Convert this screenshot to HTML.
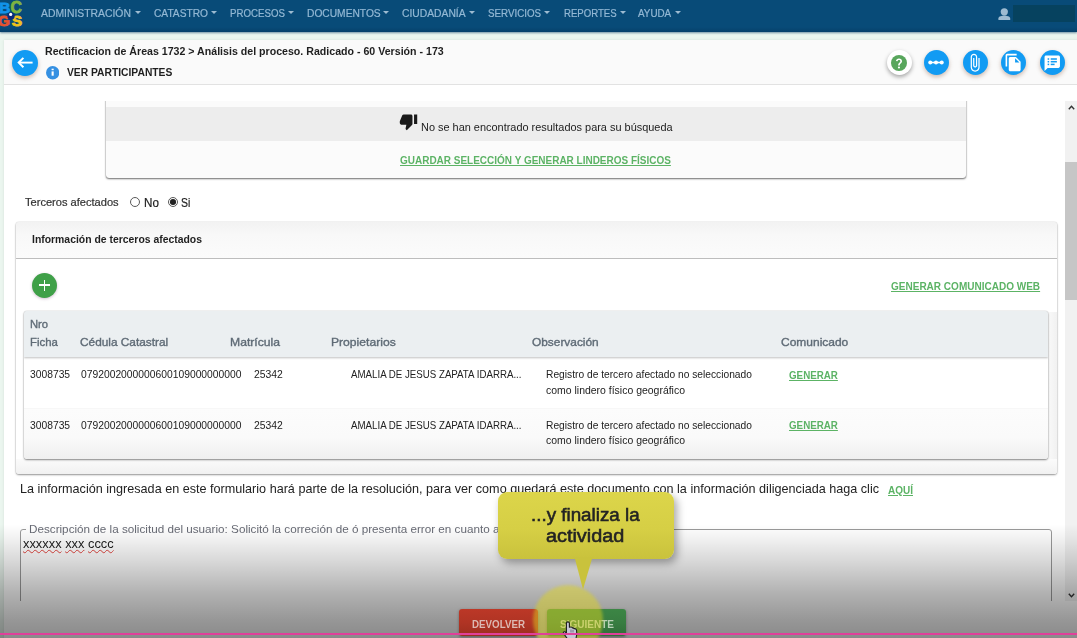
<!DOCTYPE html>
<html><head><meta charset="utf-8"><title>BCGS</title>
<style>
html,body{margin:0;padding:0;}
body{width:1077px;height:638px;overflow:hidden;position:relative;background:#ebf6ef;font-family:"Liberation Sans",sans-serif;}
.abs{position:absolute;}
.t{position:absolute;transform-origin:0 0;white-space:nowrap;line-height:1;font-family:"Liberation Sans",sans-serif;}
#nav{position:absolute;left:0;top:0;width:1077px;height:32px;background:linear-gradient(#084b78,#084b78 85%,#06406a);box-shadow:0 1px 2px rgba(10,60,100,.55);}
#redact{position:absolute;left:1013px;top:5px;width:62px;height:17px;background:#06425f;}
.caret{position:absolute;top:11px;width:0;height:0;border-left:3px solid transparent;border-right:3px solid transparent;border-top:3.5px solid #9dbbd1;}
#card{position:absolute;left:4px;top:39.5px;width:1080px;height:610px;background:#fff;box-shadow:0 0 3px rgba(0,0,0,.09);}
#cardhead{position:absolute;left:0;top:0;width:100%;height:45px;background:#fafafa;border-bottom:1px solid #e2e2e2;box-sizing:border-box;}
.fab{position:absolute;border-radius:50%;background:#129bf3;box-shadow:0 2px 4px rgba(120,70,40,.35);}
#scroll{position:absolute;left:0;top:101px;width:1077px;height:500px;overflow:hidden;}
#sbar{position:absolute;left:1065px;top:101px;width:12px;height:500px;background:#f1f1f1;}
#sthumb{position:absolute;left:1065px;top:162px;width:12px;height:138px;background:#c6c6c6;}
#box1{position:absolute;left:106px;top:-6px;width:860px;height:83px;background:#fbfbfb;border-radius:0 0 3px 3px;box-shadow:0 1px 2px rgba(0,0,0,.55),0 0 1px rgba(0,0,0,.5);}
#box1 .g{position:absolute;left:0;top:11.800px;width:100%;height:34.400px;background:#ededed;}
#panel{position:absolute;left:16px;top:120.5px;width:1041px;height:252px;background:#fff;border-radius:3px;box-shadow:0 1px 2px rgba(0,0,0,.4),0 0 1px rgba(0,0,0,.35);}
#panelhead{position:absolute;left:0;top:0;width:100%;height:36px;background:linear-gradient(#f2f2f2,#f8f8f8 35%,#fbfbfb);border-bottom:1.5px solid #bdbdbd;border-radius:3px 3px 0 0;}
#tbl{position:absolute;left:24px;top:209.5px;width:1024px;height:148px;background:#fff;border-radius:3px;box-shadow:0 1px 2px rgba(0,0,0,.45),0 0 1px rgba(0,0,0,.4);overflow:hidden;}
#tblhead{position:absolute;left:0;top:0;width:100%;height:46px;background:#ebeff1;box-shadow:0 1px 2px rgba(0,0,0,.25);}
#row2{position:absolute;left:0;top:97px;width:100%;height:51px;background:linear-gradient(#fcfcfc,#fafafa 55%,#efefef);border-top:1px solid #f7f7f7;}
.radio{position:absolute;width:8.4px;height:8.4px;border:1px solid #5a5a5a;border-radius:50%;background:#fff;}
#fs{position:absolute;left:20px;top:428px;width:1032.3px;height:120px;border:1px solid #9a9a9a;border-radius:3px;box-sizing:border-box;}
#fsmask{position:absolute;left:26px;top:424px;width:474px;height:8px;background:#fff;}
#shade{position:absolute;left:0;top:524px;width:1077px;height:114px;background:linear-gradient(rgba(0,0,0,0) 0%,rgba(0,0,0,.05) 12%,rgba(0,0,0,.16) 34%,rgba(0,0,0,.30) 60%,rgba(0,0,0,.41) 85%,rgba(0,0,0,.46) 100%);}
.btn{position:absolute;top:609px;height:27px;border-radius:3px;box-shadow:0 1px 3px rgba(0,0,0,.35);}
#pink{position:absolute;left:0;top:633px;width:1077px;height:2px;background:#e0409a;}
#callout{position:absolute;left:497.5px;top:491.5px;width:176.5px;height:67px;border-radius:9px;background:linear-gradient(#dcd54a,#d6cf45 55%,#c9c23c);box-shadow:3px 4px 8px rgba(0,0,0,.35);}
#hl{position:absolute;left:533px;top:584.5px;width:70px;height:70px;border-radius:50%;background:rgba(222,212,30,.48);filter:blur(1.5px);}
.ct{position:absolute;white-space:nowrap;line-height:1;font-weight:700;color:#222;font-size:18px;}

u.w{text-decoration:underline wavy #e0443e;text-decoration-thickness:1px;text-underline-offset:0.5px;}

</style></head>
<body>
<div id="nav">
  <svg class="abs" style="left:0;top:0" width="26" height="31" viewBox="0 0 26 31">
    <text x="-0.8" y="13.2" font-family="Liberation Sans" font-weight="700" font-size="15.3" fill="#1193ea" stroke="#1193ea" stroke-width=".9">B</text>
    <text x="10.600" y="13.400" font-family="Liberation Sans" font-weight="700" font-size="15.7" fill="#7db441" stroke="#7db441" stroke-width=".9">C</text>
    <text x="-2.200" y="26.300" font-family="Liberation Sans" font-weight="700" font-size="15.500" fill="#e4532f" stroke="#e4532f" stroke-width=".9">G</text>
    <text x="11.800" y="26.300" font-family="Liberation Sans" font-weight="700" font-size="15.500" fill="#efc21c" stroke="#efc21c" stroke-width=".9">S</text>
    <circle cx="11" cy="16" r="3.700" fill="#0b2a7c"/>
    <circle cx="10.700" cy="14.400" r="1.600" fill="#fff"/>
  </svg>
  <div class="caret" style="left:134.8px"></div>
  <div class="caret" style="left:210.8px"></div>
  <div class="caret" style="left:287.9px"></div>
  <div class="caret" style="left:383.4px"></div>
  <div class="caret" style="left:469px"></div>
  <div class="caret" style="left:544.3px"></div>
  <div class="caret" style="left:619.6px"></div>
  <div class="caret" style="left:674.9px"></div>
  <svg class="abs" style="left:998px;top:7.5px" width="12.5" height="12.5" viewBox="0 0 12.5 12.5">
    <circle cx="6.3" cy="3.8" r="3.6" fill="#9dbbd1"/>
    <path d="M0.4 12 v-1.6 c0-2 3.8-2.9 5.9-2.9 s5.9 .9 5.9 2.9 V12 z" fill="#9dbbd1"/>
  </svg>
  <div id="redact"></div>
</div>

<div id="card"><div id="cardhead"></div></div>

<!-- back button -->
<div class="fab" style="left:12.3px;top:50px;width:25.8px;height:25.8px;"></div>
<svg class="abs" style="left:12px;top:50px" width="27" height="27" viewBox="12 50 27 27"><path d="M18.9 62.600H32.600" stroke="#fff" stroke-width="1.900" fill="none"/><path d="M23.400 57.900L18.700 62.600L23.400 67.300" stroke="#fff" stroke-width="2" fill="none" stroke-linejoin="miter"/></svg>
<!-- info icon -->
<svg class="abs" style="left:45.600px;top:66.200px" width="13.400" height="13.400" viewBox="0 0 13.400 13.400"><circle cx="6.700" cy="6.700" r="6.700" fill="#3590e2"/><rect x="5.600" y="5.400" width="2.100" height="4.300" fill="#fff"/><rect x="5.600" y="2.700" width="2.100" height="1.500" fill="#fff"/></svg>

<!-- right icons -->
<div class="fab" style="left:886.5px;top:50px;width:25px;height:25px;background:#fff;box-shadow:0 2px 4px rgba(0,0,0,.35);"></div>
<svg class="abs" style="left:891px;top:54.5px" width="16" height="16" viewBox="0 0 24 24"><circle cx="12" cy="12" r="12" fill="#58a65c"/><path d="M10.7 15.6h2.5v-.5c0-1 .5-1.6 1.4-2.4 1-.9 1.9-1.8 1.9-3.5 0-2.3-1.9-3.9-4.5-3.9-2.5 0-4.3 1.5-4.6 3.8l2.4.4c.2-1.200 1-2 2.200-2 1.200 0 2 .7 2 1.800 0 .9-.5 1.500-1.400 2.300-1.200 1-1.900 2-1.900 3.500z" fill="#fff"/><circle cx="11.950" cy="18.700" r="1.600" fill="#fff"/></svg>

<div class="fab" style="left:923.8px;top:50px;width:25px;height:25px;"></div>
<svg class="abs" style="left:928.3px;top:58px" width="16" height="9" viewBox="0 0 32 18"><rect x="3" y="7.4" width="26" height="3.200" fill="#fff"/><circle cx="4.500" cy="9" r="4" fill="#fff"/><circle cx="16" cy="9" r="4" fill="#fff"/><circle cx="27.500" cy="9" r="4" fill="#fff"/></svg>

<div class="fab" style="left:962.5px;top:50px;width:25px;height:25px;"></div>
<svg class="abs" style="left:965.3px;top:52.6px" width="19.5" height="19.5" viewBox="0 0 24 24"><path d="M16.500 6v11.500c0 2.200-1.800 4-4 4s-4-1.800-4-4V5c0-1.400 1.100-2.500 2.500-2.500s2.500 1.100 2.500 2.500v10.500c0 .55-.45 1-1 1s-1-.45-1-1V6H10v9.500c0 1.400 1.100 2.500 2.500 2.500s2.500-1.100 2.500-2.500V5c0-2.200-1.800-4-4-4S7 2.800 7 5v12.500c0 3 2.500 5.500 5.500 5.500s5.500-2.500 5.500-5.500V6z" fill="#fff"/></svg>

<div class="fab" style="left:1001.200px;top:50px;width:25px;height:25px;"></div>
<svg class="abs" style="left:1004.2px;top:52.6px" width="19" height="19" viewBox="0 0 24 24"><path d="M16 1H4c-1.100 0-2 .9-2 2v14h2V3h12z" fill="#fff"/><path d="M15 5H8c-1.100 0-2 .9-2 2v14c0 1.100.9 2 2 2h11c1.100 0 2-.9 2-2V11zM14 12V6.500l5.500 5.500z" fill="#fff"/></svg>

<div class="fab" style="left:1039.500px;top:50px;width:25px;height:25px;"></div>
<svg class="abs" style="left:1043px;top:54px" width="18.5" height="18.5" viewBox="0 0 24 24"><path d="M20 2H4c-1.100 0-2 .9-2 2v18l4-4h14c1.100 0 2-.9 2-2V4c0-1.100-.9-2-2-2z" fill="#fff"/><g fill="#129bf3"><rect x="6" y="5.500" width="2" height="2"/><rect x="6" y="9" width="2" height="2"/><rect x="6" y="12.500" width="2" height="2"/><rect x="10" y="5.500" width="8" height="2"/><rect x="10" y="9" width="8" height="2"/><rect x="10" y="12.500" width="5" height="2"/></g></svg>

<!-- scroll area -->
<div id="scroll">
  <div id="box1"><div class="g"></div></div>
  <div id="panel"><div class="abs" style="right:0;top:90px;width:9px;bottom:0;background:linear-gradient(to right,#f9f9f9,#f1f1f1);border-radius:0 0 3px 0"></div><div class="abs" style="left:0;right:0;bottom:0;height:15px;background:linear-gradient(#fbfbfb,#f1f1f1);border-radius:0 0 3px 3px"></div><div id="panelhead"></div></div>
  <div id="tbl"><div id="tblhead"></div><div id="row2"></div></div>
  <div id="fs"></div><div id="fsmask"></div>
</div>
<div id="sbar"></div><div id="sthumb"></div>
<svg class="abs" style="left:1067.500px;top:104.500px" width="7" height="5" viewBox="0 0 7 5"><path d="M0.800 4.200 L3.500 1.300 L6.200 4.200" fill="none" stroke="#333" stroke-width="1.400"/></svg>
<svg class="abs" style="left:1067.500px;top:593px" width="7" height="5" viewBox="0 0 7 5"><path d="M0.800 0.800 L3.500 3.700 L6.200 0.800" fill="none" stroke="#333" stroke-width="1.400"/></svg>

<!-- thumb down -->
<svg class="abs" style="left:397.700px;top:112px" width="21" height="19" viewBox="0 0 24 24"><path d="M15 3H6c-.83 0-1.540.5-1.840 1.220l-3.020 7.050c-.09.230-.14.470-.14.730v2c0 1.100.9 2 2 2h6.310l-.95 4.570-.03.320c0 .41.170.79.440 1.060L9.830 23l6.590-6.590c.36-.36.580-.86.580-1.410V5c0-1.100-.9-2-2-2zm4 0v12h4V3h-4z" fill="#1a1a1a"/></svg>

<!-- radios -->
<div class="radio" style="left:130.000px;top:196.600px"></div>
<div class="radio" style="left:167.700px;top:196.600px"></div>
<div class="abs" style="left:170.1px;top:199px;width:5.6px;height:5.6px;border-radius:50%;background:#222"></div>

<!-- add button -->
<div class="fab" style="left:32.200px;top:272.600px;width:25px;height:25px;background:#3fa048;box-shadow:0 1px 3px rgba(90,30,90,.28);"></div>
<div class="abs" style="left:39.200px;top:284.300px;width:11px;height:1.600px;background:#fff"></div>
<div class="abs" style="left:43.900px;top:279.600px;width:1.600px;height:11px;background:#fff"></div>

<span class="t" style="left:41.2px;top:9.3px;font-size:10px;font-weight:400;color:#93b8d4;transform:scaleX(1.0372);-webkit-text-stroke:0.2px #93b8d4;">ADMINISTRACIÓN</span>
<span class="t" style="left:153.5px;top:9.3px;font-size:10px;font-weight:400;color:#93b8d4;transform:scaleX(1.0176);-webkit-text-stroke:0.2px #93b8d4;">CATASTRO</span>
<span class="t" style="left:229.8px;top:9.3px;font-size:10px;font-weight:400;color:#93b8d4;transform:scaleX(0.9685);-webkit-text-stroke:0.2px #93b8d4;">PROCESOS</span>
<span class="t" style="left:306.5px;top:9.3px;font-size:10px;font-weight:400;color:#93b8d4;transform:scaleX(1.0229);-webkit-text-stroke:0.2px #93b8d4;">DOCUMENTOS</span>
<span class="t" style="left:402.0px;top:9.3px;font-size:10px;font-weight:400;color:#93b8d4;transform:scaleX(1.0310);-webkit-text-stroke:0.2px #93b8d4;">CIUDADANÍA</span>
<span class="t" style="left:487.5px;top:9.3px;font-size:10px;font-weight:400;color:#93b8d4;transform:scaleX(0.9764);-webkit-text-stroke:0.2px #93b8d4;">SERVICIOS</span>
<span class="t" style="left:563.5px;top:9.3px;font-size:10px;font-weight:400;color:#93b8d4;transform:scaleX(0.9609);-webkit-text-stroke:0.2px #93b8d4;">REPORTES</span>
<span class="t" style="left:638.0px;top:9.3px;font-size:10px;font-weight:400;color:#93b8d4;transform:scaleX(0.9846);-webkit-text-stroke:0.2px #93b8d4;">AYUDA</span>
<span class="t" style="left:44.6px;top:46.9px;font-size:10.4px;font-weight:700;color:#1f1f1f;transform:scaleX(1.0215);">Rectificacion de Áreas 1732 > Análisis del proceso. Radicado - 60 Versión - 173</span>
<span class="t" style="left:66.7px;top:67.8px;font-size:10.4px;font-weight:700;color:#1f1f1f;transform:scaleX(0.9895);">VER PARTICIPANTES</span>
<span class="t" style="left:421.0px;top:122.4px;font-size:10.7px;font-weight:400;color:#222;transform:scaleX(1.0228);">No se han encontrado resultados para su búsqueda</span>
<span class="t" style="left:400.2px;top:154.7px;font-size:10.5px;font-weight:700;color:#5cb365;transform:scaleX(0.9508);text-decoration:underline;text-decoration-thickness:1px;text-underline-offset:0.8px;">GUARDAR SELECCIÓN Y GENERAR LINDEROS FÍSICOS</span>
<span class="t" style="left:24.6px;top:198.1px;font-size:10.4px;font-weight:400;color:#333;transform:scaleX(1.0661);-webkit-text-stroke:0.2px #333;">Terceros afectados</span>
<span class="t" style="left:144.0px;top:196.6px;font-size:12.2px;font-weight:400;color:#222;transform:scaleX(0.9555);-webkit-text-stroke:0.2px #222;">No</span>
<span class="t" style="left:181.2px;top:196.6px;font-size:12.2px;font-weight:400;color:#222;transform:scaleX(0.8576);-webkit-text-stroke:0.2px #222;">Si</span>
<span class="t" style="left:32.0px;top:234.0px;font-size:10.8px;font-weight:700;color:#1f1f1f;transform:scaleX(0.9637);">Información de terceros afectados</span>
<span class="t" style="left:891.2px;top:281.4px;font-size:10.5px;font-weight:700;color:#5cb365;transform:scaleX(0.9537);text-decoration:underline;text-decoration-thickness:1px;text-underline-offset:0.8px;">GENERAR COMUNICADO WEB</span>
<span class="t" style="left:29.5px;top:318.8px;font-size:11px;font-weight:400;color:#5f6b76;transform:scaleX(1.0206);-webkit-text-stroke:0.35px #5f6b76;">Nro</span>
<span class="t" style="left:29.5px;top:336.6px;font-size:11px;font-weight:400;color:#5f6b76;transform:scaleX(1.0332);-webkit-text-stroke:0.35px #5f6b76;">Ficha</span>
<span class="t" style="left:79.7px;top:336.6px;font-size:11px;font-weight:400;color:#5f6b76;transform:scaleX(1.0764);-webkit-text-stroke:0.35px #5f6b76;">Cédula Catastral</span>
<span class="t" style="left:230.0px;top:336.6px;font-size:11px;font-weight:400;color:#5f6b76;transform:scaleX(1.1050);-webkit-text-stroke:0.35px #5f6b76;">Matrícula</span>
<span class="t" style="left:331.0px;top:336.6px;font-size:11px;font-weight:400;color:#5f6b76;transform:scaleX(1.1022);-webkit-text-stroke:0.35px #5f6b76;">Propietarios</span>
<span class="t" style="left:531.6px;top:336.6px;font-size:11px;font-weight:400;color:#5f6b76;transform:scaleX(1.0799);-webkit-text-stroke:0.35px #5f6b76;">Observación</span>
<span class="t" style="left:781.3px;top:336.6px;font-size:11px;font-weight:400;color:#5f6b76;transform:scaleX(1.0896);-webkit-text-stroke:0.35px #5f6b76;">Comunicado</span>
<span class="t" style="left:30.0px;top:370.1px;font-size:10.1px;font-weight:400;color:#222;transform:scaleX(1.0204);">3008735</span>
<span class="t" style="left:81.4px;top:370.1px;font-size:10.1px;font-weight:400;color:#222;transform:scaleX(1.0211);">0792002000000600109000000000</span>
<span class="t" style="left:253.6px;top:370.1px;font-size:10.1px;font-weight:400;color:#222;transform:scaleX(1.0293);">25342</span>
<span class="t" style="left:351.0px;top:370.1px;font-size:10.1px;font-weight:400;color:#222;transform:scaleX(0.9619);">AMALIA DE JESUS ZAPATA IDARRA...</span>
<span class="t" style="left:546.0px;top:370.0px;font-size:10.2px;font-weight:400;color:#222;transform:scaleX(1.0043);">Registro de tercero afectado no seleccionado</span>
<span class="t" style="left:546.0px;top:385.6px;font-size:10.2px;font-weight:400;color:#222;transform:scaleX(1.0270);">como lindero físico geográfico</span>
<span class="t" style="left:789.3px;top:369.8px;font-size:10.5px;font-weight:700;color:#5cb365;transform:scaleX(0.9312);text-decoration:underline;text-decoration-thickness:1px;text-underline-offset:0.8px;">GENERAR</span>
<span class="t" style="left:30.0px;top:420.6px;font-size:10.1px;font-weight:400;color:#222;transform:scaleX(1.0204);">3008735</span>
<span class="t" style="left:81.4px;top:420.6px;font-size:10.1px;font-weight:400;color:#222;transform:scaleX(1.0211);">0792002000000600109000000000</span>
<span class="t" style="left:253.6px;top:420.6px;font-size:10.1px;font-weight:400;color:#222;transform:scaleX(1.0293);">25342</span>
<span class="t" style="left:351.0px;top:420.6px;font-size:10.1px;font-weight:400;color:#222;transform:scaleX(0.9619);">AMALIA DE JESUS ZAPATA IDARRA...</span>
<span class="t" style="left:546.0px;top:420.5px;font-size:10.2px;font-weight:400;color:#222;transform:scaleX(1.0043);">Registro de tercero afectado no seleccionado</span>
<span class="t" style="left:546.0px;top:436.1px;font-size:10.2px;font-weight:400;color:#222;transform:scaleX(1.0270);">como lindero físico geográfico</span>
<span class="t" style="left:789.3px;top:420.3px;font-size:10.5px;font-weight:700;color:#5cb365;transform:scaleX(0.9312);text-decoration:underline;text-decoration-thickness:1px;text-underline-offset:0.8px;">GENERAR</span>
<span class="t" style="left:20.0px;top:483.2px;font-size:12.1px;font-weight:400;color:#222;transform:scaleX(1.0431);">La información ingresada en este formulario hará parte de la resolución, para ver como quedará este documento con la información diligenciada haga clic</span>
<span class="t" style="left:887.5px;top:484.5px;font-size:10.5px;font-weight:700;color:#5cb365;transform:scaleX(0.9524);text-decoration:underline;text-decoration-thickness:1px;text-underline-offset:0.8px;">AQUÍ</span>
<span class="t" style="left:29.1px;top:523.8px;font-size:11.4px;font-weight:400;color:#686b75;transform:scaleX(1.0263);">Descripción de la solicitud del usuario: Solicitó la correción de ó presenta error en cuanto a</span>
<span class="t" style="left:22.6px;top:537.3px;font-size:13px;font-weight:400;color:#222;transform:scaleX(0.9886);"><u class="w">xxxxxx</u> <u class="w">xxx</u> <u class="w">cccc</u></span>

<div id="shade"></div>
<!-- buttons -->
<div class="btn" style="left:459.2px;width:78.7px;background:linear-gradient(#bc3827,#b03424 50%,#9c2e1f);"></div>
<div class="btn" style="left:546.7px;width:79.7px;background:linear-gradient(#3c8645,#387d41 50%,#316e39);"></div>
<span class="t" style="left:472.0px;top:618.6px;font-size:10.6px;font-weight:700;color:#dcb9b2;transform:scaleX(0.9217);">DEVOLVER</span>
<span class="t" style="left:559.7px;top:618.6px;font-size:10.6px;font-weight:700;color:#b9d0b6;transform:scaleX(0.9456);">SIGUIENTE</span>

<div id="hl"></div>
<div id="callout"></div>
<svg class="abs" style="left:572px;top:557px" width="24" height="34" viewBox="0 0 24 34"><path d="M2.500 0 L20.500 0 L11 32.500 z" fill="#c9c23c"/></svg>
<span class="t" style="left:530.9px;top:505.6px;font-size:18px;font-weight:400;color:#232323;transform:scaleX(1.0438);-webkit-text-stroke:0.55px #232323;">...y finaliza la</span>
<span class="t" style="left:545.7px;top:526.9px;font-size:18px;font-weight:400;color:#232323;transform:scaleX(1.1021);-webkit-text-stroke:0.55px #232323;">actividad</span>

<!-- cursor -->
<svg class="abs" style="left:560px;top:620px" width="20" height="18" viewBox="0 0 20 18"><path d="M6.4 3.200 Q6.400 1.900 7.900 1.900 Q9.400 1.900 9.400 3.200 L9.400 7.200 L10.800 7 Q12 6.800 12.500 7.900 Q13.600 7.600 14.200 8.600 Q16 8.400 16.500 9.900 L16.800 14 L16 18.500 L7.200 18.500 L3.300 13 Q3.300 11.300 5 11.800 L6.400 13 Z" fill="#c6c6d6" stroke="#1c1c1c" stroke-width="1.100" stroke-linejoin="round"/><path d="M11 9.500v3M13 9.800v2.700" stroke="#5a5a78" stroke-width=".8"/></svg>
<div id="pink"></div>

</body></html>
